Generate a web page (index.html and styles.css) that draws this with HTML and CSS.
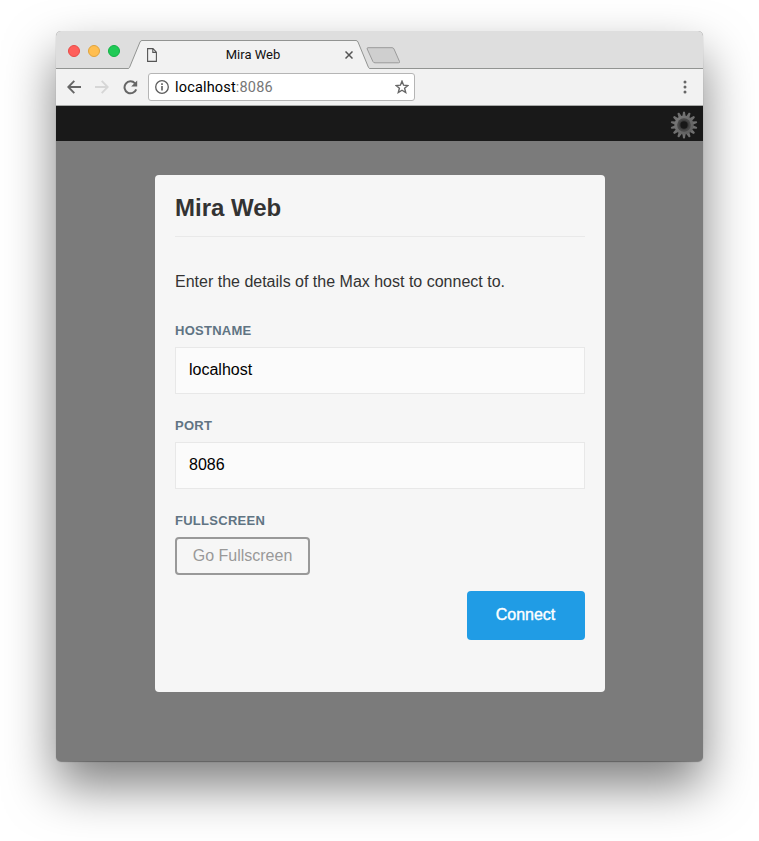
FILE: index.html
```html
<!DOCTYPE html>
<html lang="en">
<head>
<meta charset="utf-8">
<title>Mira Web</title>
<link rel="stylesheet" href="styles.css">
</head>
<body>
<div class="window">
  <header class="tabstrip">
    <div class="lights"><i class="light red"></i><i class="light amber"></i><i class="light green"></i></div>
    <div class="tab">
      <svg class="slant" width="14" height="29" viewBox="0 0 14 29"><path d="M0 29V28.5L1.5 27.5L12 2Q12.7.5 14 .5V29Z" fill="#f2f2f2"/><path d="M0 28.5Q1 28.5 1.5 27.5L12 2Q12.7.5 14 .5" fill="none" stroke="#929492"/></svg>
      <div class="tab-body">
        <svg class="page-icon" width="10" height="14" viewBox="0 0 10 14" fill="none" stroke="#555" stroke-width="1.1"><path d="M.6.6H6L9.4 4.2V13.4H.6ZM5.8.6V4.4H9.4"/></svg>
        <span class="tab-title">Mira Web</span>
        <svg class="close" width="8" height="8" viewBox="0 0 8 8" stroke="#555" stroke-width="1.5"><path d="M.5.5L7.5 7.5M7.5.5L.5 7.5"/></svg>
      </div>
      <svg class="slant" width="14" height="29" viewBox="0 0 14 29"><path d="M14 29V28.5L12.5 27.5L2 2Q1.3.5 0 .5V29Z" fill="#f2f2f2"/><path d="M14 28.5Q13 28.5 12.5 27.5L2 2Q1.3.5 0 .5" fill="none" stroke="#929492"/></svg>
    </div>
    <svg class="new-tab" width="35" height="17" viewBox="0 0 35 17"><path d="M2 .7H26Q27.5.7 28 2L33.5 14.5Q34 15.8 32.5 15.8H9Q7.5 15.8 6.9 14.5L1.2 2Q.7.7 2 .7Z" fill="#cfcfcf" stroke="#9b9b9b"/></svg>
  </header>
  <nav class="toolbar">
    <svg class="back" width="14" height="14" viewBox="0 0 14 14" fill="none" stroke="#666" stroke-width="1.9"><path d="M14 7H1.5M7.3.8L1.3 7L7.3 13.2"/></svg>
    <svg class="forward" width="14" height="14" viewBox="0 0 14 14" fill="none" stroke="#d6d6d6" stroke-width="1.9"><path d="M0 7H12.5M6.7.8L12.7 7L6.7 13.2"/></svg>
    <svg class="reload" width="15" height="15" viewBox="0 0 15 15"><path d="M12 3.3A6 6 0 1 0 13.2 9.3" fill="none" stroke="#666" stroke-width="2"/><path d="M14.2.5V6.5H8.2Z" fill="#666"/></svg>
    <div class="address">
      <svg width="14" height="14" viewBox="0 0 14 14"><circle cx="7" cy="7" r="6.3" fill="none" stroke="#5c5c5c" stroke-width="1.3"/><path d="M6.2 6H7.8V10.5H6.2ZM6.2 3.3H7.8V4.9H6.2Z" fill="#5c5c5c"/></svg>
      <span class="url">localhost<span class="url-port">:8086</span></span>
      <svg class="star" width="14" height="14" viewBox="0 0 14 14" fill="none" stroke="#666" stroke-width="1.4"><path d="M7 1.2L8.6 5.2L12.9 5.5L9.6 8.3L10.7 12.5L7 10.2L3.3 12.5L4.4 8.3L1.1 5.5L5.4 5.2Z"/></svg>
    </div>
    <svg class="menu" width="4" height="14" viewBox="0 0 4 14" fill="#666"><circle cx="2" cy="2" r="1.5"/><circle cx="2" cy="7" r="1.5"/><circle cx="2" cy="12" r="1.5"/></svg>
  </nav>
  <div class="app-bar">
    <svg width="28" height="28" viewBox="-14 -14 28 28">
      <defs>
        <linearGradient id="metal" x1="0" y1="0" x2="1" y2="1"><stop offset="0" stop-color="#7c7c7c"/><stop offset="1" stop-color="#5a5a5a"/></linearGradient>
        <path id="tooth" d="M-1.7-8.5L-1-13Q0-14 1-13L1.7-8.5Z"/>
        <g id="pair"><use href="#tooth"/><use href="#tooth" transform="rotate(180)"/></g>
      </defs>
      <g fill="#707070"><use href="#pair"/><use href="#pair" transform="rotate(25.714)"/><use href="#pair" transform="rotate(51.429)"/><use href="#pair" transform="rotate(77.143)"/><use href="#pair" transform="rotate(102.857)"/><use href="#pair" transform="rotate(128.571)"/><use href="#pair" transform="rotate(154.286)"/></g>
      <circle r="9.6" fill="url(#metal)"/>
      <circle r="6.8" fill="#484848"/><circle r="5" fill="#3b3b3b"/><circle r="3.7" fill="#171717"/>
    </svg>
  </div>
  <main class="content">
    <form class="dialog">
      <h1>Mira Web</h1>
      <p>Enter the details of the Max host to connect to.</p>
      <label for="host" class="l-host">Hostname</label>
      <input id="host" type="text" value="localhost">
      <label for="port" class="l-port">Port</label>
      <input id="port" type="text" value="8086">
      <span class="label l-full">Fullscreen</span>
      <button type="button" class="fullscreen">Go Fullscreen</button>
      <button type="button" class="connect">Connect</button>
    </form>
  </main>
</div>
</body>
</html>
```
FILE: styles.css
```css
* { box-sizing: border-box; }
body { margin: 0; height: 841px; padding: 31px 56px 0; overflow: hidden; background: #fff; font-family: "Liberation Sans", Arial, sans-serif; }
svg { display: block; flex: none; }
.window { width: 647px; height: 730px; border-radius: 5px; display: flex; flex-direction: column; background: #7b7b7b; box-shadow: 0 1px 1px rgba(0,0,0,.35), 0 25px 50px rgba(0,0,0,.5); }
.tabstrip { height: 38px; flex: none; display: flex; background: #dedede; border-radius: 5px 5px 0 0; border-bottom: 1px solid #929492; padding-left: 12px; }
.lights { display: flex; gap: 8px; padding-top: 14px; width: 60px; }
.light { width: 12px; height: 12px; border-radius: 50%; }
.red { background: #ff5f5b; border: 1px solid #e84b47; }
.amber { background: #ffbe50; border: 1px solid #e0a33c; }
.green { background: #20ca56; border: 1px solid #12b145; }
.tab { height: 29px; margin-top: 9px; display: flex; }
.tab-body { width: 214px; height: 29px; background: #f2f2f2; border-top: 1px solid #929492; display: flex; align-items: center; padding: 0 3px 0 5px; }
.tab-title { flex: 1; text-align: center; font: 13px/16px Roboto, sans-serif; color: #111; padding-left: 4px; }
.new-tab { margin: 16px 0 0 -4px; }
.toolbar { height: 37px; flex: none; background: #f2f2f2; border-bottom: 1px solid #a8aaa8; display: flex; align-items: center; padding: 0 16px 0 11px; }
.forward { margin-left: 14px; }
.reload { margin-left: 14px; }
.address { width: 267px; height: 28px; margin-left: 10px; background: #fff; border: 1px solid #b5b5b5; border-radius: 3px; display: flex; align-items: center; padding: 0 5px 0 6px; }
.url { flex: 1; margin-left: 6px; padding-top: 1px; font: 14.5px/18px Roboto, sans-serif; letter-spacing: .17px; color: #000; }
.url-port { color: #777; }
.menu { margin-left: auto; }
.app-bar { height: 35px; flex: none; background: #191919; display: flex; justify-content: flex-end; padding: 5px 5px 0 0; }
.content { flex: 1; padding: 34px 98px 0 99px; }
.dialog { display: flex; flex-direction: column; height: 517px; padding: 0 20px; border-radius: 4px; background: #f6f6f6; }
h1 { margin: 0; height: 62px; padding-top: 19px; font-size: 24px; line-height: 28px; color: #333; border-bottom: 1px solid #e9e9e9; }
p { margin: 35px 0 0; font-size: 16px; line-height: 20px; color: #333; white-space: nowrap; }
label, .label { font-size: 13px; line-height: 16px; font-weight: bold; text-transform: uppercase; color: #607483; letter-spacing: .27px; }
.l-host { margin-top: 31px; }
.l-port, .l-full { margin-top: 24px; }
input { display: block; width: 410px; height: 47px; margin: 8px 0 0; padding: 0 13px 1px; border: 1px solid #e8e8e8; background: #fbfbfb; font: 16px "Liberation Sans", Arial, sans-serif; color: #000; }
button { font: 16px "Liberation Sans", Arial, sans-serif; border-radius: 4px; padding: 0; }
.fullscreen { width: 135px; height: 38px; margin-top: 8px; border: 2px solid #999; background: transparent; color: #999; }
.connect { align-self: flex-end; width: 118px; height: 49px; margin-top: 16px; padding: 0 1px 2px 0; border: 0; background: #209ce5; color: #fff; -webkit-text-stroke: .4px #fff; }
```
